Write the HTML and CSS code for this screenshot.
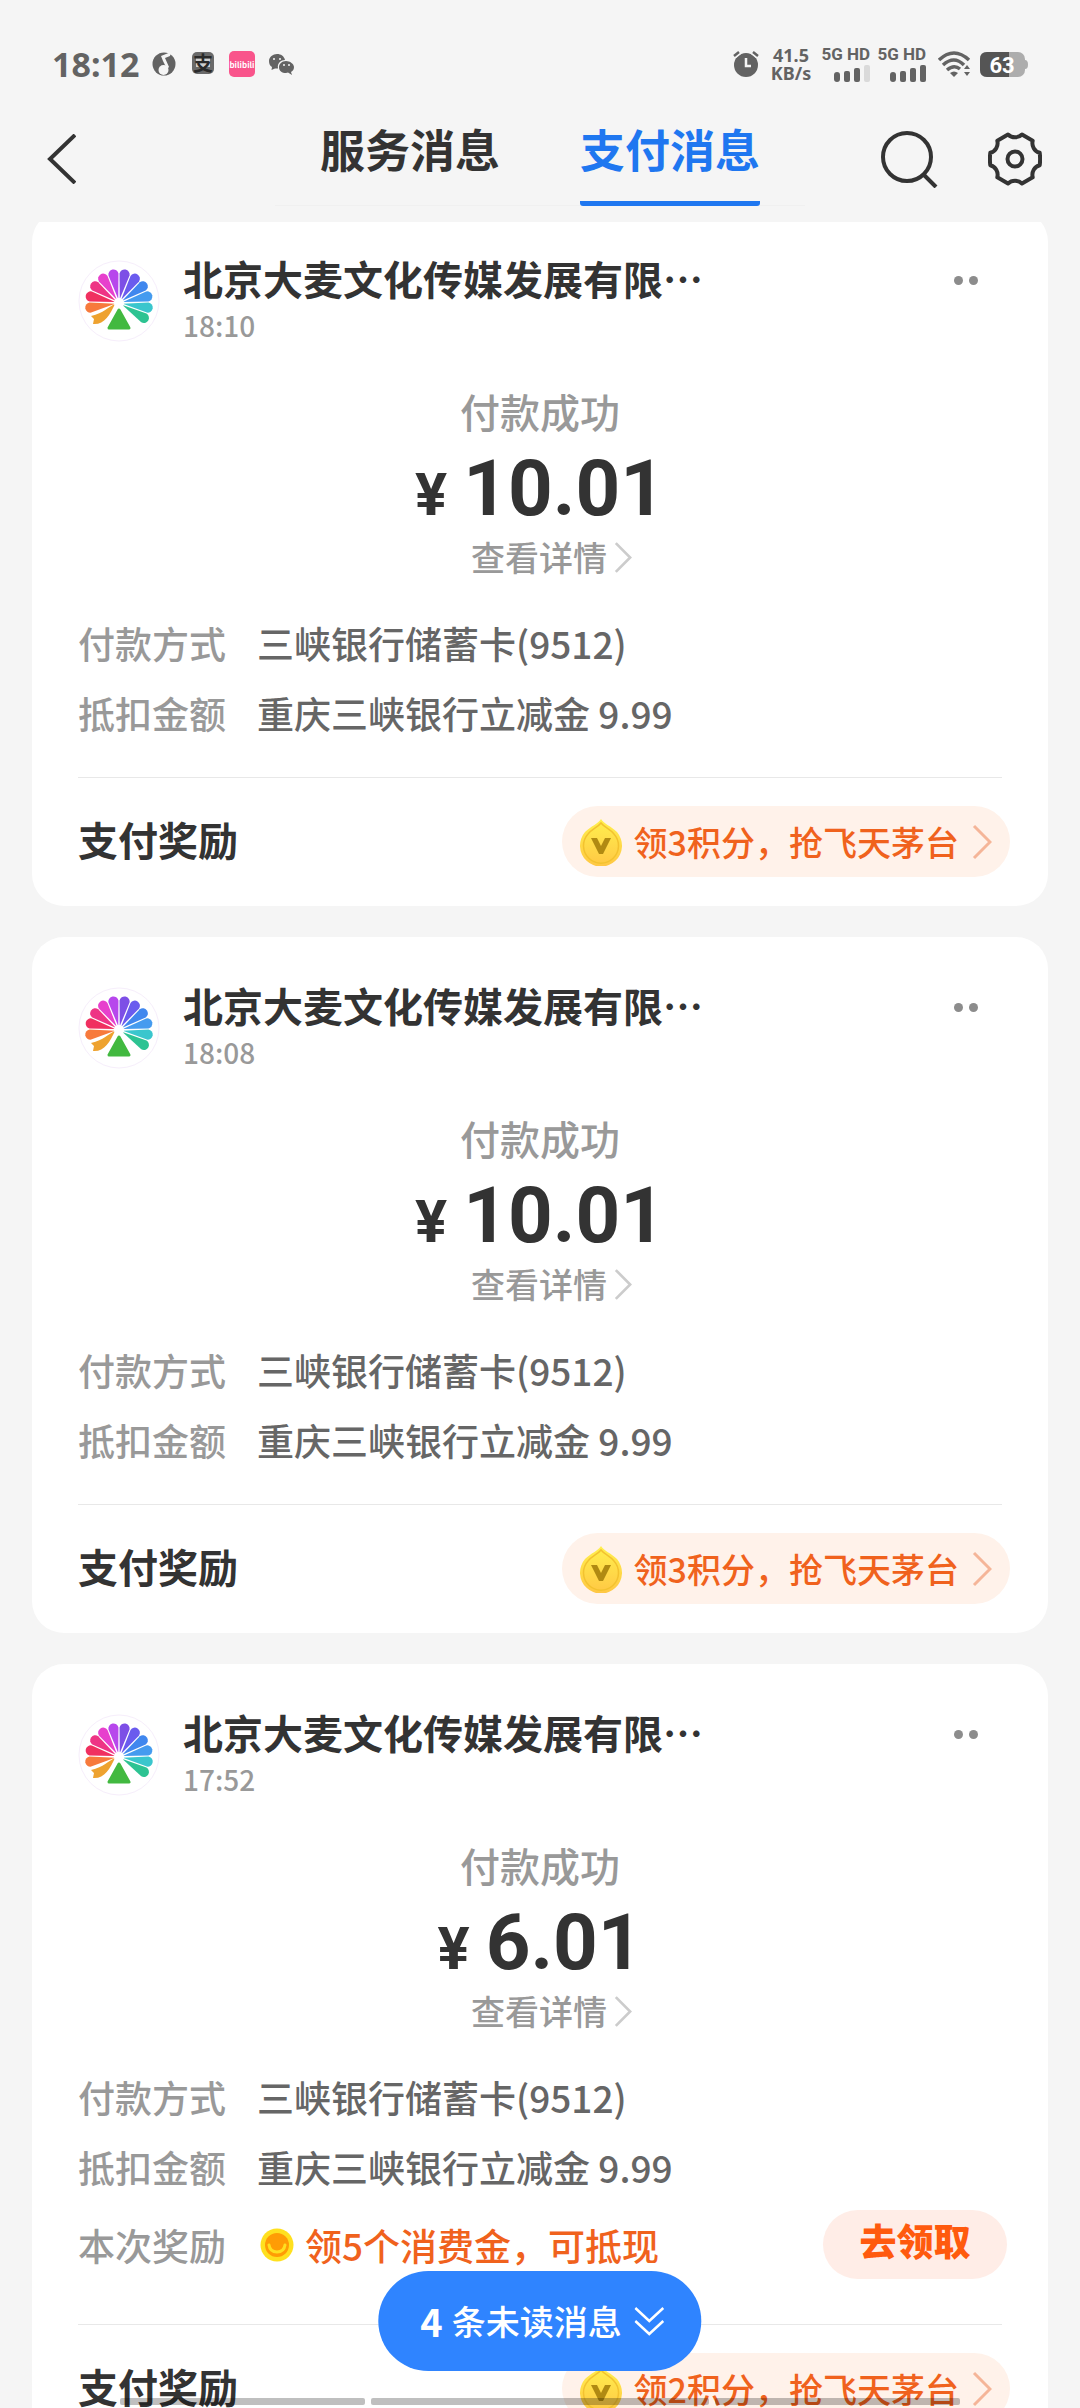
FILE: index.html
```html
<!DOCTYPE html>
<html lang="zh-CN">
<head>
<meta charset="utf-8">
<meta name="viewport" content="width=device-width, initial-scale=1">
<title>支付消息</title>
<link rel="stylesheet" href="styles.css">
</head>
<body>
<svg class="sprite" aria-hidden="true">
  <defs>
    <linearGradient id="gold" x1="0" y1="0" x2="0" y2="1">
      <stop offset="0" stop-color="#fff04e"/>
      <stop offset="1" stop-color="#ffc744"/>
    </linearGradient>
    <path id="petal" d="M0 -4L-5.100 -29A5.100 5.100 0 0 1 5.100 -29Z"/>
  </defs>
  <symbol id="fan" viewBox="-41 -43 82 82">
    <circle cx="0" cy="-2" r="40" fill="#fff" stroke="#f6eefb"/>
    <use href="#petal" transform="rotate(-99)" fill="#f77a3c"/>
    <use href="#petal" transform="rotate(-77)" fill="#f03060"/>
    <use href="#petal" transform="rotate(-55)" fill="#ee3485"/>
    <use href="#petal" transform="rotate(-33)" fill="#e740cd"/>
    <use href="#petal" transform="rotate(-11)" fill="#b747ec"/>
    <use href="#petal" transform="rotate(11)" fill="#7d4fe6"/>
    <use href="#petal" transform="rotate(33)" fill="#6a5bee"/>
    <use href="#petal" transform="rotate(55)" fill="#4087ee"/>
    <use href="#petal" transform="rotate(77)" fill="#459bef"/>
    <use href="#petal" transform="rotate(99)" fill="#3ac6cd"/>
    <use href="#petal" transform="rotate(121)" fill="#2dc392"/>
    <path d="M-4 1C-11 4 -15 10 -28 13L-25 16L-26 21C-15 22 -9 12 -4 1Z" fill="#eea22f"/>
    <circle r="5" fill="#fff"/>
    <path d="M0 7L10 25H-10Z" fill="#42b940" stroke="#42b940" stroke-width="3" stroke-linejoin="round"/>
  </symbol>
  <symbol id="point" viewBox="0 0 42 48">
    <path d="M21 1C24 6 31 8 37 14A21 21 0 1 1 5 14C11 8 18 6 21 1Z" fill="url(#gold)"/>
    <path d="M21 5C24 9 30 11 34 16A17.500 17.500 0 1 1 8 16C12 11 18 9 21 5Z" fill="none" stroke="#f3c22f" stroke-width="1.500"/>
    <path d="M11 20H17L21 28L25 20H31L23 36H19Z" fill="#b08a12"/>
  </symbol>
  <symbol id="more-right" viewBox="0 0 20 34">
    <path d="M2 1L18 17L2 33" fill="none" stroke="currentColor" stroke-width="3"/>
  </symbol>
  <symbol id="bars" viewBox="0 0 36 17">
    <rect x="0" y="7" width="6" height="10" rx="3"/>
    <rect x="10" y="6" width="6" height="11" rx="2"/>
    <rect x="20" y="3" width="6" height="14" rx="2"/>
  </symbol>
</svg>

<header class="top">
  <div class="status">
    <span class="clock">18:12</span>
    <svg class="st-icon music" viewBox="0 0 24 24" aria-hidden="true"><circle cx="12" cy="12" r="11.500" fill="#636363"/><path d="M19 0L9 4L11 9L15 17L17 15L13 6L18 4Z" fill="#f5f5f5"/><circle cx="11.500" cy="18" r="5" fill="#f5f5f5"/></svg>
    <svg class="st-icon pay" viewBox="0 0 24 24" aria-hidden="true"><rect width="22" height="22" rx="5" fill="#6a6a6a"/><rect x="4" y="4" width="14" height="11" fill="#cfcfcf"/><text x="1" y="19" font-size="20" font-weight="700" fill="#2a2a2a">支</text></svg>
    <svg class="st-icon bili" viewBox="0 0 26 26" aria-hidden="true"><rect width="26" height="26" rx="5" fill="#f9548b"/><text x="13" y="17" font-size="8" font-weight="700" text-anchor="middle" fill="#fff">bilibili</text></svg>
    <svg class="st-icon chat" viewBox="0 0 25 21" aria-hidden="true"><path d="M8 0C4 0 0 3 0 7C0 10 1 12 3 13L2.500 16L6 14.500H9C8 9 12 6 16 6C15 2 12 0 8 0Z" fill="#636363"/><path d="M17 7C13 7 10 10 10 13C10 17 13 19 17 19L19 18.500L23 21L22 18C24 17 25 15 25 13C25 10 21 7 17 7Z" fill="#636363"/><g fill="#f5f5f5"><circle cx="5" cy="5" r="1"/><circle cx="11" cy="5" r="1"/><circle cx="15" cy="11" r="1"/><circle cx="20" cy="11" r="1"/></g></svg>
    <div class="signals">
      <svg class="alarm" viewBox="0 0 26 26" aria-hidden="true"><circle cx="13" cy="14" r="12" fill="#636363"/><path d="M13 7V15H18" fill="none" stroke="#f5f5f5" stroke-width="2.500"/><path d="M1 5L6 1M20 1L25 5" stroke="#f5f5f5" stroke-width="6"/><path d="M1 5L6 1M20 1L25 5" stroke="#636363" stroke-width="2.500"/></svg>
      <div class="speed"><span>41.5</span><span>KB/s</span></div>
      <div class="cell"><span>5G HD</span><svg viewBox="0 0 36 17" aria-hidden="true"><use href="#bars"/><rect x="30" y="0" width="6" height="17" rx="2" fill="#dadada"/></svg></div>
      <div class="cell"><span>5G HD</span><svg viewBox="0 0 36 17" aria-hidden="true"><use href="#bars"/><rect x="30" y="0" width="6" height="17" rx="2"/></svg></div>
      <svg class="wifi" viewBox="0 0 33 26" aria-hidden="true"><g fill="none" stroke="#636363" stroke-width="3.500"><path d="M1 9Q16 -5 31 9"/><path d="M5 14Q16 4 26 14"/><path d="M9 19Q16 13 22 18"/></g><path d="M12 22Q16 19 20 22L16 26ZM26 18L29 14L32 18ZM26 21H32L29 25Z" fill="#636363"/></svg>
      <svg class="battery" viewBox="0 0 48 25" aria-hidden="true"><rect width="45" height="25" rx="7" fill="#adadad"/><path d="M45 8Q48 8 48 12.500Q48 17 45 17Z" fill="#adadad"/><path d="M7 0H29V25H7Q0 25 0 18V7Q0 0 7 0Z" fill="#555"/><text x="22" y="21" font-size="22" font-weight="700" text-anchor="middle" fill="#fff">63</text></svg>
    </div>
  </div>
  <nav class="nav">
    <button class="icon-btn back" aria-label="返回"><svg viewBox="0 0 29 50"><path d="M28 1L3 25L28 49" fill="none" stroke="currentColor" stroke-width="4"/></svg></button>
    <div class="tabs">
      <a class="tab" href="#service">服务消息</a>
      <a class="tab active" href="#payment" aria-current="page">支付消息</a>
    </div>
    <div class="tools">
      <button class="icon-btn" aria-label="搜索"><svg class="search" viewBox="0 0 57 57"><circle cx="26" cy="26" r="24" fill="none" stroke="currentColor" stroke-width="4"/><path d="M42 43L55 56" stroke="currentColor" stroke-width="4"/></svg></button>
      <button class="icon-btn" aria-label="设置"><svg class="gear" viewBox="-27 -27 54 54"><g fill="none" stroke="currentColor" stroke-width="4" stroke-linejoin="round"><path d="M24.700 -6.200Q25.500 0 24.700 6.200A10 10 0 0 0 17.700 18.300L7 24.500A10 10 0 0 0 -7 24.500L-17.700 18.300A10 10 0 0 0 -24.700 6.200Q-25.500 0 -24.700 -6.200A10 10 0 0 0 -17.700 -18.300L-7 -24.500A10 10 0 0 0 7 -24.500L17.700 -18.300A10 10 0 0 0 24.700 -6.200Z"/><circle r="7.500"/></g></svg></button>
    </div>
  </nav>
</header>

<main class="feed" id="payment">
  <article class="card">
    <div class="head">
      <svg class="avatar" aria-hidden="true"><use href="#fan"/></svg>
      <div class="who"><h2>北京大麦文化传媒发展有限…</h2><time>18:10</time></div>
      <button class="more" aria-label="更多"><i></i><i></i></button>
    </div>
    <div class="result">
      <p class="state">付款成功</p>
      <p class="amount"><span class="yen">¥</span><span>10.01</span></p>
      <a class="detail" href="#detail">查看详情<svg aria-hidden="true"><use href="#more-right"/></svg></a>
    </div>
    <dl class="rows">
      <div class="row"><dt>付款方式</dt><dd>三峡银行储蓄卡(9512)</dd></div>
      <div class="row"><dt>抵扣金额</dt><dd>重庆三峡银行立减金 9.99</dd></div>
    </dl>
    <div class="foot">
      <h3>支付奖励</h3>
      <a class="pill" href="#points"><svg class="drop" aria-hidden="true"><use href="#point"/></svg>领3积分，抢飞天茅台<svg class="arrow" aria-hidden="true"><use href="#more-right"/></svg></a>
    </div>
  </article>

  <article class="card">
    <div class="head">
      <svg class="avatar" aria-hidden="true"><use href="#fan"/></svg>
      <div class="who"><h2>北京大麦文化传媒发展有限…</h2><time>18:08</time></div>
      <button class="more" aria-label="更多"><i></i><i></i></button>
    </div>
    <div class="result">
      <p class="state">付款成功</p>
      <p class="amount"><span class="yen">¥</span><span>10.01</span></p>
      <a class="detail" href="#detail">查看详情<svg aria-hidden="true"><use href="#more-right"/></svg></a>
    </div>
    <dl class="rows">
      <div class="row"><dt>付款方式</dt><dd>三峡银行储蓄卡(9512)</dd></div>
      <div class="row"><dt>抵扣金额</dt><dd>重庆三峡银行立减金 9.99</dd></div>
    </dl>
    <div class="foot">
      <h3>支付奖励</h3>
      <a class="pill" href="#points"><svg class="drop" aria-hidden="true"><use href="#point"/></svg>领3积分，抢飞天茅台<svg class="arrow" aria-hidden="true"><use href="#more-right"/></svg></a>
    </div>
  </article>

  <article class="card">
    <div class="head">
      <svg class="avatar" aria-hidden="true"><use href="#fan"/></svg>
      <div class="who"><h2>北京大麦文化传媒发展有限…</h2><time>17:52</time></div>
      <button class="more" aria-label="更多"><i></i><i></i></button>
    </div>
    <div class="result">
      <p class="state">付款成功</p>
      <p class="amount"><span class="yen">¥</span><span>6.01</span></p>
      <a class="detail" href="#detail">查看详情<svg aria-hidden="true"><use href="#more-right"/></svg></a>
    </div>
    <dl class="rows">
      <div class="row"><dt>付款方式</dt><dd>三峡银行储蓄卡(9512)</dd></div>
      <div class="row"><dt>抵扣金额</dt><dd>重庆三峡银行立减金 9.99</dd></div>
      <div class="row bonus"><dt>本次奖励</dt><dd><svg class="coin" viewBox="0 0 34 34" aria-hidden="true"><circle cx="17" cy="17" r="16.500" fill="#ffe01f"/><circle cx="17" cy="17" r="12" fill="#ff9c05"/><path d="M9 17Q10 24 17 24Q24 24 25 17" fill="none" stroke="#ffdf20" stroke-width="3" stroke-linecap="round"/></svg>领5个消费金，可抵现</dd><button class="claim">去领取</button></div>
    </dl>
    <div class="foot">
      <h3>支付奖励</h3>
      <a class="pill" href="#points"><svg class="drop" aria-hidden="true"><use href="#point"/></svg>领2积分，抢飞天茅台<svg class="arrow" aria-hidden="true"><use href="#more-right"/></svg></a>
    </div>
  </article>
</main>

<button class="unread"><b>4</b><span>条未读消息</span><svg viewBox="0 0 30 29" aria-hidden="true"><path d="M1 1L15 14L29 1M1 14L15 27L29 14" fill="none" stroke="currentColor" stroke-width="2.500"/></svg></button>
<div class="home-bar" aria-hidden="true"><i></i><i></i><i></i></div>
</body>
</html>
```

FILE: styles.css
```css
* { box-sizing: border-box; margin: 0; padding: 0; }

body {
  display: flex;
  flex-direction: column;
  height: 100vh;
  overflow: hidden;
  background: #f5f5f5;
  color: #333;
  font-family: "Noto Sans CJK SC", "Noto Sans", sans-serif;
  font-weight: 500;
}

button { border: 0; background: none; color: inherit; font: inherit; }
a { color: inherit; text-decoration: none; }
svg { display: block; flex: none; }
.sprite { position: absolute; width: 0; height: 0; }

/* status bar */
.top { flex: none; height: 222px; }
.status {
  display: flex;
  align-items: center;
  height: 100px;
  padding: 28px 52px 0;
  color: #636363;
}
.clock { font: 700 34px/40px "Noto Sans", sans-serif; }
.st-icon { height: 24px; overflow: visible; }
.music { width: 24px; margin-left: 13px; }
.pay { width: 24px; margin-left: 16px; }
.bili { width: 26px; height: 26px; margin-left: 13px; }
.chat { width: 25px; height: 21px; margin-left: 14px; }
.signals { display: flex; align-items: center; margin-left: auto; }
.alarm { width: 26px; height: 26px; margin-right: 12px; }
.speed {
  display: flex;
  flex-direction: column;
  align-items: center;
  width: 40px;
  margin-right: 11px;
  font: 700 18px/18px "Noto Sans", sans-serif;
}
.cell {
  display: flex;
  flex-direction: column;
  align-items: flex-end;
  gap: 2px;
  width: 48px;
  margin-right: 8px;
  font: 700 17px/17px Roboto, sans-serif;
  white-space: nowrap;
}
.cell svg { width: 36px; height: 17px; fill: #636363; }
.wifi { width: 33px; height: 26px; margin: 0 9px 0 4px; }
.battery { width: 48px; height: 25px; font-family: Roboto, sans-serif; }

/* navigation */
.nav {
  display: grid;
  grid-template-columns: 1fr auto 1fr;
  align-items: start;
  padding: 0 38px;
}
.icon-btn { display: flex; align-items: center; height: 118px; }
.back { padding-left: 9px; }
.back svg { width: 29px; height: 50px; }
.tabs {
  display: flex;
  gap: 80px;
  height: 106px;
  padding: 0 45px;
  box-shadow: inset 0 -1px #f0f0f0;
}
.tab {
  border-bottom: 5px solid transparent;
  font-size: 45px;
  font-weight: 700;
  line-height: 97px;
}
.tab.active { border-color: #1f77f0; border-radius: 3px; color: #1f77f0; }
.tools { display: flex; justify-content: flex-end; gap: 50px; }
.search { width: 57px; height: 57px; }
.gear { width: 54px; height: 54px; }

/* message feed */
.feed { flex: 1; min-height: 0; overflow: hidden; padding: 0 32px; }
.card { margin-bottom: 31px; border-radius: 32px; background: #fff; }
.card:first-child { margin-top: -12px; }

.head { display: flex; align-items: flex-start; padding: 48px 46px 0; }
.avatar { width: 82px; height: 82px; margin-top: 2px; }
.who { flex: 1; margin-left: 23px; }
.who h2 { font-size: 40px; font-weight: 700; line-height: 40px; }
.who time { display: block; margin-top: 9px; color: #999; font-size: 28px; line-height: 36px; }
.more { display: flex; gap: 6px; padding: 18px 24px 18px 0; }
.more i { width: 9px; height: 9px; border-radius: 50%; background: #8c8c8c; }

.result {
  display: flex;
  flex-direction: column;
  align-items: center;
  margin-top: 44px;
  color: #999;
}
.state { font-size: 40px; line-height: 48px; }
.amount {
  display: flex;
  align-items: baseline;
  gap: 16px;
  margin-top: 14px;
  color: #333;
  font: 700 78px/80px Roboto, sans-serif;
}
.yen { font-size: 60px; line-height: 60px; }
.detail {
  display: flex;
  align-items: center;
  gap: 7px;
  margin-top: 6px;
  padding-left: 23px;
  font-size: 34px;
  line-height: 44px;
}
.detail svg { width: 18px; height: 31px; color: #ccc; }

.rows {
  margin: 39px 46px 0;
  padding-bottom: 39px;
  border-bottom: 1px solid #e8e8e8;
  font-size: 37px;
  line-height: 50px;
}
.row { display: flex; align-items: center; }
.row + .row { margin-top: 20px; }
.row dt { width: 179px; color: #999; }
.row dd { display: flex; align-items: center; color: #666; }
.row.bonus { margin-top: 18px; margin-bottom: 6px; }
.bonus dd { color: #f0621d; }
.coin { width: 34px; height: 34px; margin: 0 11px 0 3px; }
.claim {
  width: 184px;
  height: 69px;
  margin-right: -5px;
  margin-left: auto;
  padding-bottom: 9px;
  border-radius: 35px;
  background: #ffede7;
  color: #ff5a0e;
  font-weight: 900;
  line-height: 60px;
}

.foot {
  display: flex;
  align-items: center;
  justify-content: space-between;
  padding: 28px 38px 29px 46px;
}
.foot h3 { font-size: 40px; font-weight: 700; line-height: 67px; padding-bottom: 4px; }
.pill {
  display: flex;
  align-items: center;
  height: 71px;
  padding: 0 18px;
  border-radius: 36px;
  background: #fff2ea;
  color: #f0621d;
  font-size: 34px;
  line-height: 67px;
}
.drop { width: 42px; height: 48px; margin-right: 12px; }
.arrow { width: 20px; height: 36px; margin-left: 13px; color: #f5b598; }

/* floating layers */
.unread {
  position: fixed;
  bottom: 37px;
  left: 50%;
  display: flex;
  align-items: center;
  height: 100px;
  padding: 0 37px 0 42px;
  border-radius: 50px;
  background: #2f84ff;
  color: #fff;
  font-size: 34px;
  line-height: 48px;
  white-space: nowrap;
  transform: translateX(-50%);
}
.unread b { margin-right: 9px; font-size: 38px; }
.unread svg { width: 30px; height: 29px; margin-left: 13px; }
.home-bar {
  position: fixed;
  right: 120px;
  bottom: 3px;
  left: 120px;
  display: grid;
  grid-template-columns: 245fr 338fr 245fr;
  gap: 6px;
}
.home-bar i { height: 7px; border-radius: 2px; background: rgba(0, 0, 0, 0.25); }
```
